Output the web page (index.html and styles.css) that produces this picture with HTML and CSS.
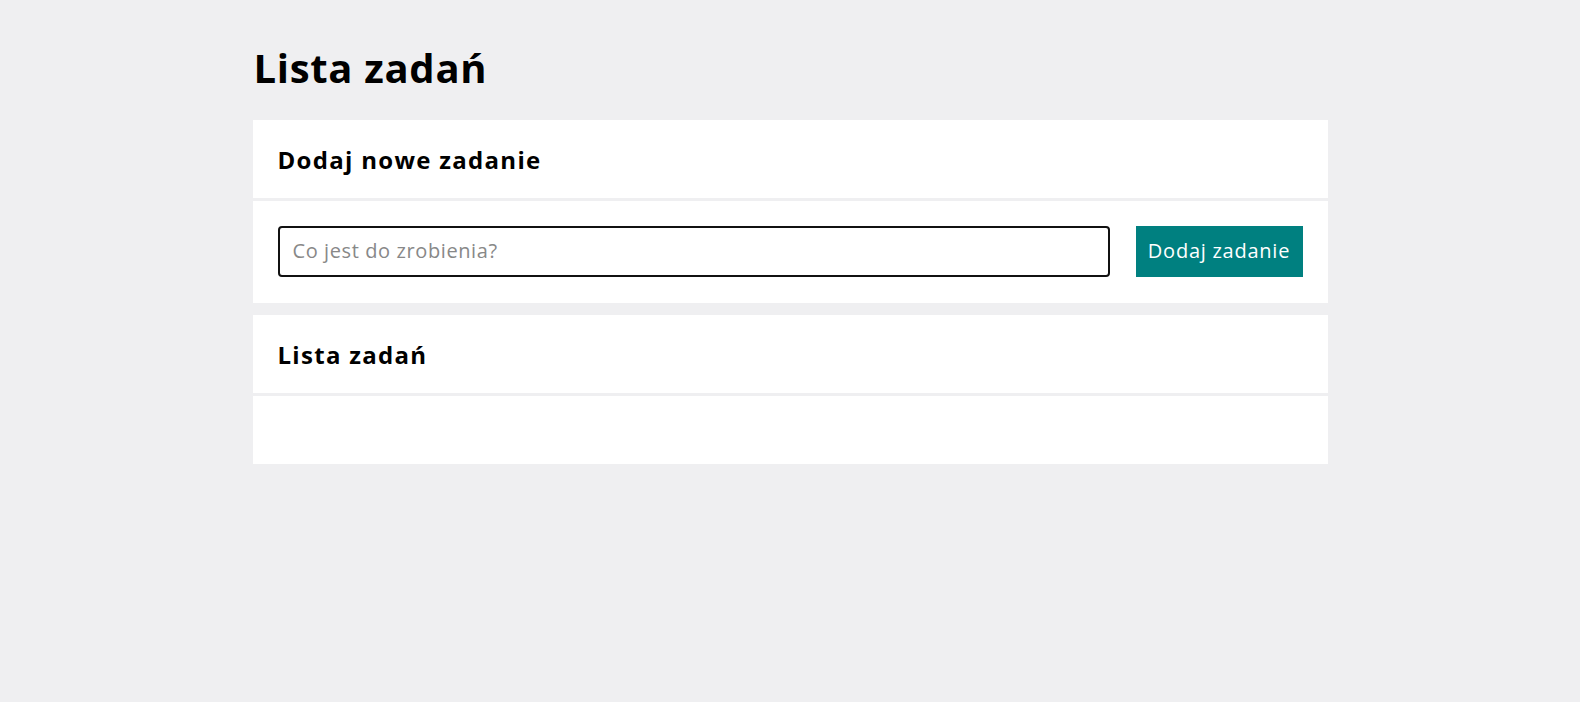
FILE: index.html
```html
<!DOCTYPE html>
<html lang="pl">
<head>
<meta charset="utf-8">
<title>Lista zadań</title>
<link rel="stylesheet" href="styles.css">
</head>
<body>
<main class="container">
  <h1 class="page-title">Lista zadań</h1>
  <section class="card">
    <header class="card-header"><h2 class="card-title">Dodaj nowe zadanie</h2></header>
    <div class="card-body">
      <form class="task-form">
        <input class="task-input" type="text" placeholder="Co jest do zrobienia?">
        <button class="task-button" type="button">Dodaj zadanie</button>
      </form>
    </div>
  </section>
  <section class="card">
    <header class="card-header"><h2 class="card-title">Lista zadań</h2></header>
    <div class="card-body list-body">
      <ul class="task-list"></ul>
    </div>
  </section>
</main>
</body>
</html>
```

FILE: styles.css
```css
* { box-sizing: border-box; }
html, body { margin: 0; padding: 0; }
body {
  background: #efeff1;
  font-family: "Open Sans", "Liberation Sans", sans-serif;
  color: #000;
}
.container {
  width: 1075px;
  margin: 0 auto;
  padding-top: 43px;
}
.page-title {
  margin: 0 0 27px 1px;
  font-size: 40px;
  line-height: 50px;
  font-weight: 700;
  letter-spacing: 0.7px;
}
.card {
  background: #fff;
  margin-bottom: 12px;
}
.card-header {
  height: 81px;
  display: flex;
  align-items: center;
  padding: 0 25px;
  border-bottom: 3px solid #efeff1;
}
.card-title {
  margin: 0;
  font-size: 24px;
  font-weight: 700;
  letter-spacing: 1.3px;
}
.card-body {
  padding: 25px 25px 26px;
}
.list-body { min-height: 68px; }
.task-list { margin: 0; padding: 0; list-style: none; }
.task-form {
  display: flex;
  gap: 26px;
  margin: 0;
}
.task-input {
  flex: 1;
  height: 51px;
  border: 2px solid #111;
  border-radius: 4px;
  padding: 0 13px 3px;
  font-family: inherit;
  font-size: 20px;
  letter-spacing: 0.6px;
  color: #000;
  background: #fff;
}
.task-input::placeholder { color: #888; }
.task-button {
  width: 167px;
  height: 51px;
  border: 0;
  background: #008080;
  color: #fff;
  font-family: inherit;
  font-size: 20px;
  letter-spacing: 0.75px;
  padding: 0 0 3px;
}
```
